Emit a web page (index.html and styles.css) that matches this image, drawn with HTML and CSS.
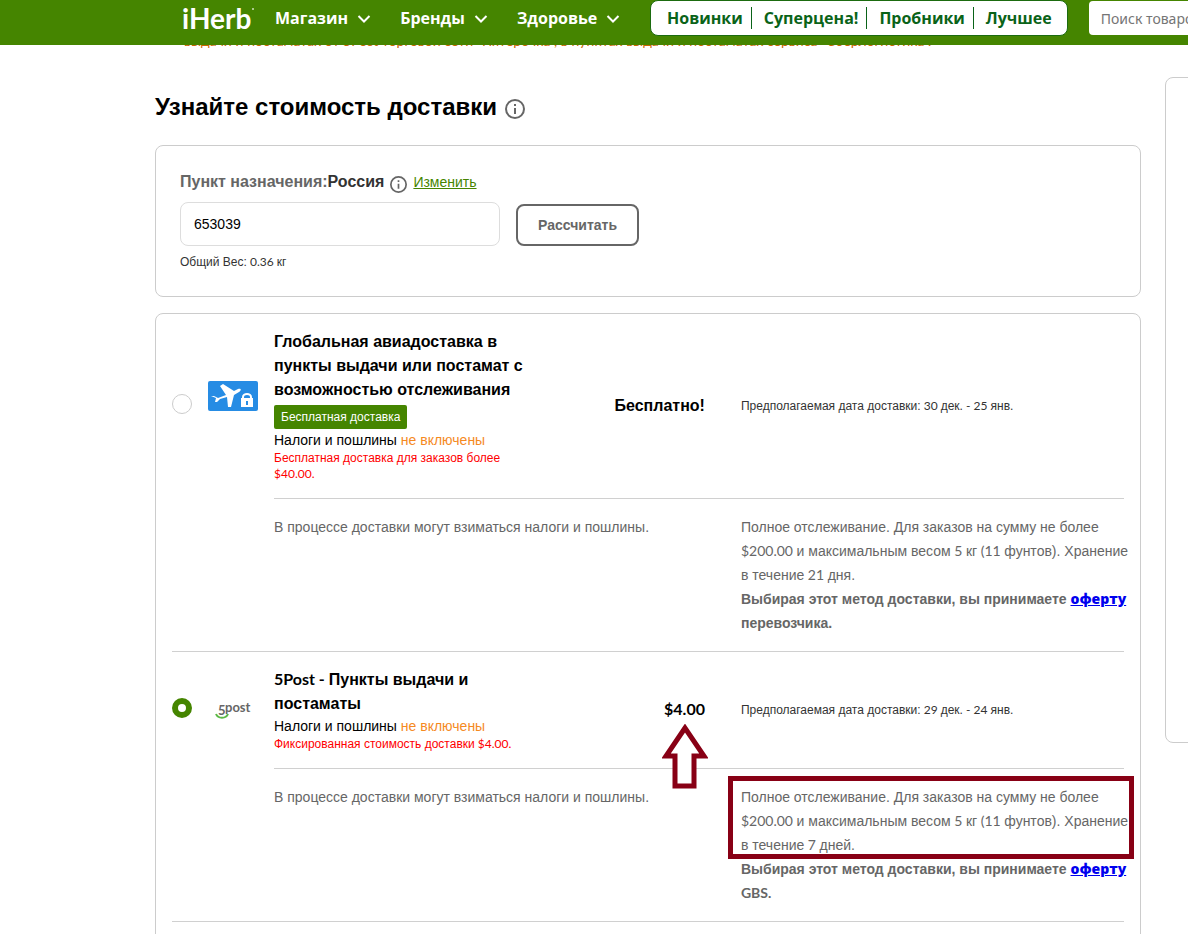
FILE: index.html
```
<!DOCTYPE html>
<html lang="ru">
<head>
    <meta charset="UTF-8">
    <meta name="viewport" content="width=device-width, initial-scale=1.0">
    <title>iHerb - Стоимость доставки</title>
    <link rel="stylesheet" href="styles.css">
</head>
<body>
    <header class="header">
        <a href="#" class="logo">iHerb<svg width="4" height="4" viewBox="0 0 4 4"><circle cx="2" cy="2" r="1"/></svg></a>
        <nav class="menu">
            <a href="#">Магазин <svg width="14" height="8" viewBox="0 0 14 8"><path d="M1.500 1 7 6.500 12.500 1"/></svg></a>
            <a href="#">Бренды <svg width="14" height="8" viewBox="0 0 14 8"><path d="M1.500 1 7 6.500 12.500 1"/></svg></a>
            <a href="#">Здоровье <svg width="14" height="8" viewBox="0 0 14 8"><path d="M1.500 1 7 6.500 12.500 1"/></svg></a>
        </nav>
        <nav class="quick-links">
            <a href="#">Новинки</a>
            <a href="#">Суперцена!</a>
            <a href="#">Пробники</a>
            <a href="#">Лучшее</a>
        </nav>
        <input type="text" class="search" placeholder="Поиск товаров" aria-label="Поиск товаров">
    </header>

    <div class="page">
        <main class="content">
            <p class="notice">выдачи и постаматах от 5Post торговой сети "Пятёрочка", в пунктах выдачи и постаматах сервиса "Сберлогистика".</p>

            <h1>Узнайте стоимость доставки
                <svg class="info" width="20" height="20" viewBox="0 0 20 20"><circle cx="10" cy="10" r="9"/><path d="M10 9v6M10 5v2"/></svg>
            </h1>

            <form class="card destination">
                <div class="destination-title">
                    <label for="zip">Пункт назначения:<b>Россия</b></label>
                    <svg class="info" width="17" height="17" viewBox="0 0 20 20"><circle cx="10" cy="10" r="9"/><path d="M10 9v6M10 5v2"/></svg>
                    <a href="#">Изменить</a>
                </div>
                <div class="destination-row">
                    <input type="text" id="zip" value="653039">
                    <button type="button">Рассчитать</button>
                </div>
                <p class="weight">Общий Вес:<span class="num"> 0.36 </span>кг</p>
            </form>

            <div class="card options">
                <section class="option">
                    <input type="radio" name="shipping" id="avia">
                    <svg class="carrier" width="50" height="50" viewBox="0 0 50 50">
                        <rect width="50" height="30" rx="2" fill="#268ce4"/>
                        <path fill="#fff" d="M3 15l3 0 4 2 8-3-6-9 3-2 11 7 4-2c3-1 4 1 1 3l-5 3-3 12-3 0-1-10-7 2-3 3-2 0 1-4z"/>
                        <path fill="#fff" d="M33 17h12v9H33z"/>
                        <path fill="none" stroke="#fff" stroke-width="2" d="M35 17v-1a4 3 0 0 1 8 0v1"/>
                        <path fill="#268ce4" d="M38 20h2v4h-2z"/>
                    </svg>
                    <div class="option-head">
                        <div class="option-left">
                            <div class="option-name">
                                <label for="avia">Глобальная авиадоставка в пункты выдачи или постамат с возможностью отслеживания</label>
                                <span class="badge">Бесплатная доставка</span>
                                <p class="taxes">Налоги и пошлины <span>не включены</span></p>
                                <p class="red">Бесплатная доставка для заказов более <span class="num">$40.00.</span></p>
                            </div>
                            <div class="price">Бесплатно!</div>
                        </div>
                        <p class="date">Предполагаемая дата доставки:<span class="num"> 30 </span>дек.<span class="num"> - 25 </span>янв.</p>
                    </div>
                    <div class="option-info">
                        <p>В процессе доставки могут взиматься налоги и пошлины.</p>
                        <div class="details">
                            <p>Полное отслеживание. Для заказов на сумму не более <span class="num">$200.00 </span>и максимальным весом<span class="num"> 5 </span>кг<span class="num"> (11 </span>фунтов). Хранение в течение<span class="num"> 21 </span>дня.</p>
                            <p class="terms">Выбирая этот метод доставки, вы принимаете <a href="#">оферту</a> перевозчика.</p>
                        </div>
                    </div>
                </section>

                <section class="option">
                    <input type="radio" name="shipping" id="post5" checked>
                    <svg class="carrier" width="50" height="50" viewBox="0 0 50 50">
                        <text x="10" y="30" class="carrier-name">5</text>
                        <text x="17" y="27" class="carrier-name">post</text>
                        <path fill="none" stroke="#5cb947" stroke-width="2" d="M8 29c2 5 10 5 12 0"/>
                    </svg>
                    <div class="option-head">
                        <div class="option-left">
                            <div class="option-name">
                                <label for="post5"><span class="num">5Post - </span>Пункты выдачи и постаматы</label>
                                <p class="taxes">Налоги и пошлины <span>не включены</span></p>
                                <p class="red">Фиксированная стоимость доставки<span class="num"> $4.00.</span></p>
                            </div>
                            <div class="price"><span class="num">$4.00</span>
                                <svg class="arrow" width="46" height="66" viewBox="0 0 46 66"><path d="M23 4 4 32h9v30h19V32h10z"/></svg>
                            </div>
                        </div>
                        <p class="date">Предполагаемая дата доставки:<span class="num"> 29 </span>дек.<span class="num"> - 24 </span>янв.</p>
                    </div>
                    <div class="option-info">
                        <p>В процессе доставки могут взиматься налоги и пошлины.</p>
                        <div class="details">
                            <p class="marked">Полное отслеживание. Для заказов на сумму не более <span class="num">$200.00 </span>и максимальным весом<span class="num"> 5 </span>кг<span class="num"> (11 </span>фунтов). Хранение в течение<span class="num"> 7 </span>дней.</p>
                            <p class="terms">Выбирая этот метод доставки, вы принимаете <a href="#">оферту</a> <span class="num">GBS.</span></p>
                        </div>
                    </div>
                </section>
            </div>
        </main>
        <aside class="summary"></aside>
    </div>
</body>
</html>
```
FILE: styles.css
```
* {
    box-sizing: border-box;
}

body {
    margin: 0;
    font-family: "Liberation Sans", Arial, sans-serif;
    font-size: 14px;
    line-height: 24px;
    color: #333;
    background: #fff;
    overflow-x: hidden;
}

p, h1 {
    margin: 0;
}

/* Latin letters and prices */
.num {
    font-family: Lato, sans-serif;
    line-height: 1;
}

/* Header */
.header {
    position: fixed;
    top: 0;
    left: 0;
    right: 0;
    z-index: 2;
    height: 45px;
    padding-left: 182px;
    display: flex;
    align-items: flex-start;
    background: #458500;
    overflow: hidden;
    font-family: "Open Sans", sans-serif;
}

.header a {
    text-decoration: none;
    white-space: nowrap;
}

.logo {
    width: 93px;
    flex: none;
    color: #fff;
    font-family: Lato, sans-serif;
    font-size: 28px;
    font-weight: 700;
    line-height: 36px;
}

.logo svg {
    vertical-align: 18px;
    fill: #cfe0bd;
}

.menu {
    display: flex;
    gap: 29px;
    flex: none;
    width: 375px;
}

.menu a {
    color: #fff;
    font-size: 16px;
    font-weight: 700;
    line-height: 36px;
}

.menu svg {
    margin: 0 0 1px 5px;
    fill: none;
    stroke: #fff;
    stroke-width: 2;
}

.quick-links {
    display: flex;
    align-items: center;
    flex: none;
    height: 36px;
    padding: 0 4px;
    background: #fff;
    border: 1px solid #1b6b0f;
    border-radius: 8px;
}

.quick-links a {
    padding: 0 8px 0 12px;
    color: #0a6318;
    font-size: 16px;
    font-weight: 700;
    line-height: 22px;
    border-right: 1px solid #0a6318;
}

.quick-links a:last-child {
    padding-right: 11px;
    border-right: 0;
}

.search {
    flex: none;
    width: 320px;
    height: 34px;
    margin: 1px 0 0 21px;
    padding: 0 12px;
    border: 0;
    border-radius: 4px;
    font-family: "Noto Sans", sans-serif;
    font-size: 14px;
}

/* Page */
.page {
    display: grid;
    grid-template-columns: minmax(0, 1fr) 320px;
    align-items: start;
    gap: 24px;
    margin: 29px -297px 0 155px;
}

.notice {
    padding-left: 29px;
    color: #c60;
    font-family: Lato, sans-serif;
    white-space: nowrap;
}

h1 {
    display: flex;
    align-items: center;
    gap: 8px;
    margin: 38px 0 22px;
    color: #000;
    font-size: 24px;
    line-height: 32px;
}

.info {
    flex: none;
    margin-top: 4px;
    fill: none;
    stroke: #666;
    stroke-width: 2;
}

.card {
    border: 1px solid #ccc;
    border-radius: 8px;
}

.summary {
    height: 666px;
    margin-top: 48px;
    border: 1px solid #ccc;
    border-radius: 8px;
}

/* Destination */
.destination {
    padding: 24px 24px 26px;
    margin-bottom: 16px;
}

.destination-title {
    display: flex;
    align-items: center;
    gap: 6px;
    color: #666;
    font-size: 16px;
    font-weight: 700;
}

.destination-title b {
    color: #333;
}

.destination-title a {
    color: #458500;
    font-size: 14px;
    font-weight: 400;
}

.destination-row {
    display: flex;
    align-items: flex-end;
    gap: 16px;
    margin: 8px 0;
}

.destination-row input {
    width: 320px;
    height: 44px;
    padding: 0 13px;
    border: 1px solid #ddd;
    border-radius: 8px;
    color: #000;
    font: 14px "Liberation Sans", sans-serif;
}

.destination-row button {
    height: 42px;
    padding: 0 20px;
    border: 2px solid #666;
    border-radius: 8px;
    background: #fff;
    color: #666;
    font: bold 14px "Liberation Sans", sans-serif;
}

.weight {
    font-size: 12px;
    line-height: 16px;
}

/* Shipping options */
.options {
    padding: 0 16px 48px;
}

.option {
    display: grid;
    grid-template-columns: 20px 50px minmax(0, 1fr);
    align-items: center;
    column-gap: 16px;
    border-bottom: 1px solid #d0d0d0;
}

.option input {
    appearance: none;
    width: 20px;
    height: 20px;
    margin: 0 0 4px;
    border: 1px solid #ccc;
    border-radius: 50%;
    background: #fff;
}

.option input:checked {
    border: 6px solid #458500;
}

.carrier-name {
    font-family: Lato, sans-serif;
    font-size: 13px;
    font-weight: 700;
    fill: #666;
}

.option-head,
.option-info {
    display: grid;
    grid-template-columns: minmax(0, 9fr) minmax(0, 8fr);
    column-gap: 36px;
    padding: 16px 0;
}

.option-head {
    align-items: center;
}

.option-info {
    grid-column: 3;
    border-top: 1px solid #d0d0d0;
    color: #666;
}

.details {
    margin-right: -12px;
}

.option-left {
    display: flex;
    align-items: center;
    justify-content: space-between;
}

.option-name {
    width: 258px;
}

.option-name label {
    display: block;
    color: #000;
    font-size: 16px;
    font-weight: 700;
}

.badge {
    display: block;
    width: fit-content;
    margin: 3px 0 1px;
    padding: 0 7px;
    border-radius: 2px;
    background: #458500;
    color: #fff;
    font-size: 12px;
}

.taxes {
    color: #000;
    line-height: 20px;
}

.taxes span {
    color: #f58a1f;
}

.red {
    color: #f00;
    font-size: 12px;
    line-height: 16px;
}

.price {
    position: relative;
    color: #000;
    font-size: 16px;
    font-weight: 700;
}

.date {
    font-size: 12px;
}

.terms {
    font-weight: 700;
}

.terms a {
    color: #00e;
    font-family: "Open Sans", sans-serif;
    font-weight: 800;
    line-height: 1;
}

/* Marks over the second option */
.arrow {
    position: absolute;
    top: 26px;
    right: -3px;
    fill: #fff;
    stroke: #880015;
    stroke-width: 5;
}

.marked {
    position: relative;
}

.marked::after {
    content: "";
    position: absolute;
    inset: -9px 2px -2px -13px;
    border: 5px solid #880015;
}
```
